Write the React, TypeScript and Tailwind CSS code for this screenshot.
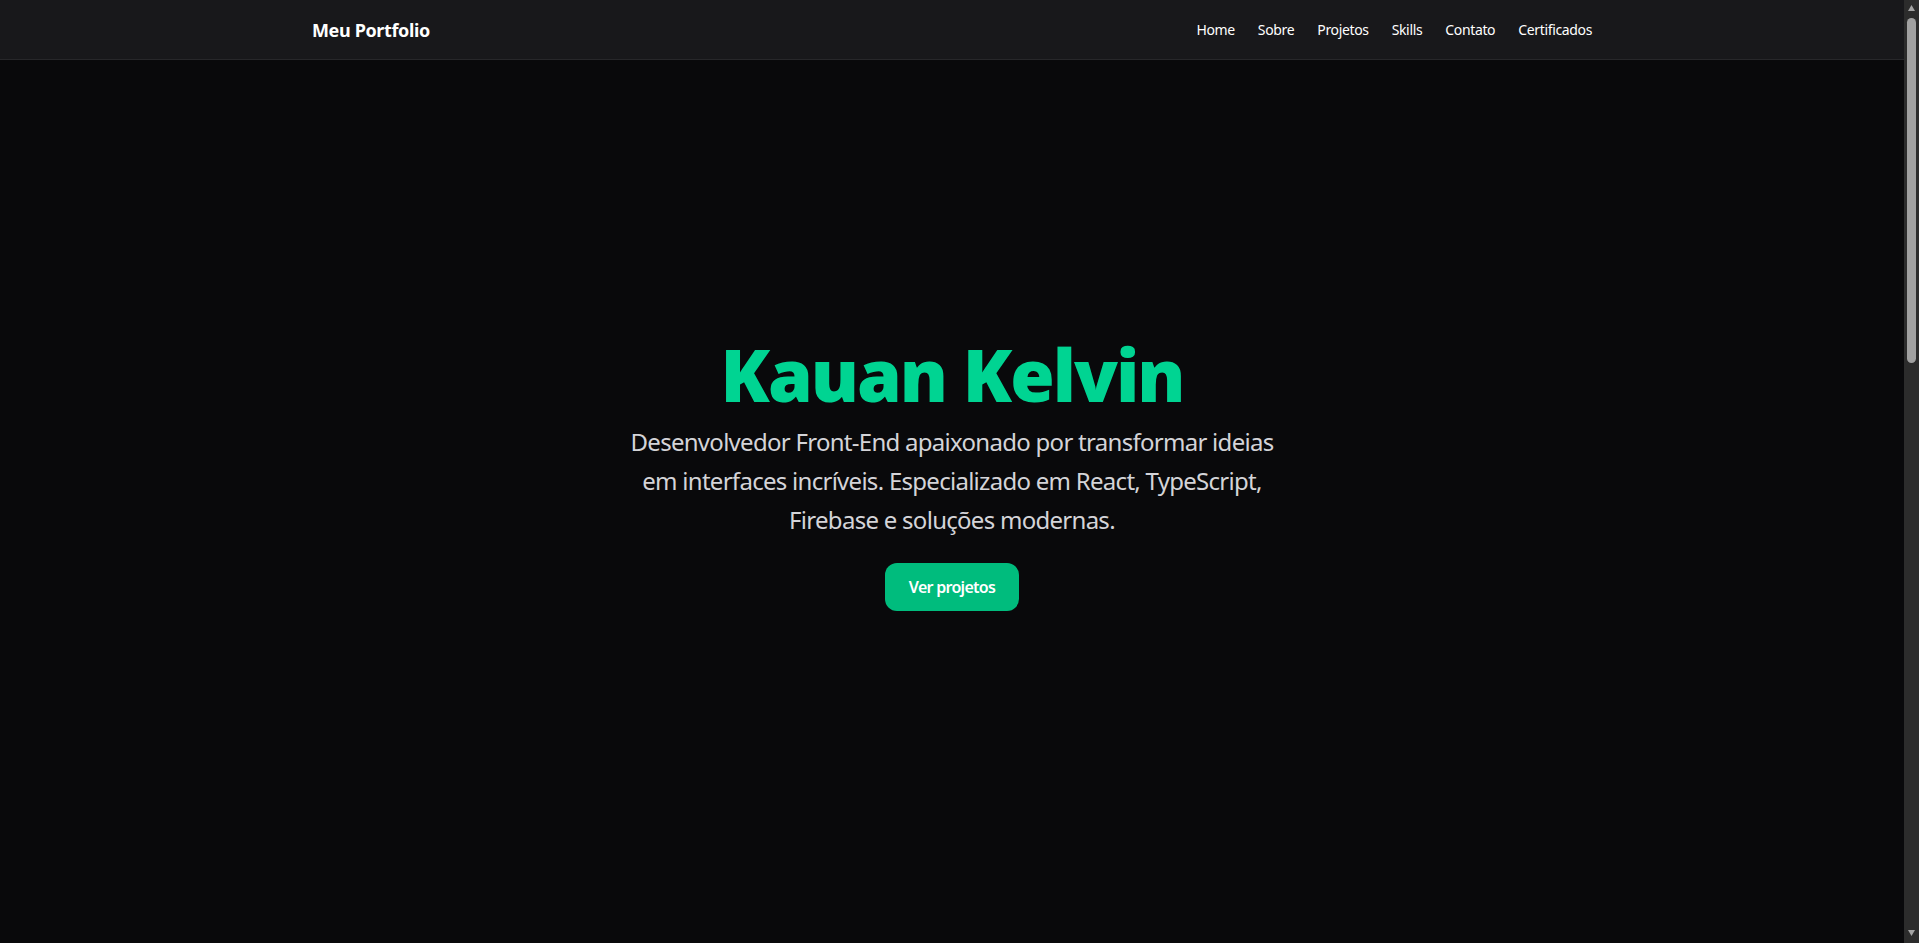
import React from "react";

const font = { fontFamily: '"Noto Sans", "Open Sans", sans-serif' };

const links = ["Home", "Sobre", "Projetos", "Skills", "Contato", "Certificados"];

function Scrollbar() {
  return (
    <div className="w-[15px] h-full bg-[#2c2c2c] flex flex-col items-center shrink-0">
      <svg width="9" height="17" viewBox="0 0 9 17" className="shrink-0">
        <path d="M4.5 5 L8 11 L1 11 Z" fill="#a3a3a3" />
      </svg>
      <div className="w-[9px] h-[345px] mt-[1px] rounded-full bg-[#a1a1a1]" />
      <div className="flex-1" />
      <svg width="9" height="17" viewBox="0 0 9 17" className="shrink-0">
        <path d="M1 4 L8 4 L4.5 10 Z" fill="#a3a3a3" />
      </svg>
    </div>
  );
}

export default function App() {
  return (
    <div className="h-screen flex bg-[#09090b] text-white overflow-hidden" style={font}>
      <div className="flex-1 flex flex-col min-w-0">
        <nav className="h-[60px] shrink-0 bg-[#18181b] border-b border-[#27272a]">
          <div className="max-w-7xl mx-auto h-full flex items-center justify-between">
            <span className="text-lg font-bold text-white tracking-[-0.02em]">Meu Portfolio</span>
            <ul className="flex items-center gap-[23px] text-sm text-white tracking-[-0.025em]">
              {links.map((l) => (
                <li key={l}>
                  <a href={`#${l.toLowerCase()}`}>{l}</a>
                </li>
              ))}
            </ul>
          </div>
        </nav>

        <section id="home" className="flex-1 flex flex-col items-center justify-center text-center px-4 pb-[54px]">
          <h1 className="text-7xl font-black text-[#00d492] leading-none tracking-[-0.028em]">Kauan Kelvin</h1>
          <p className="mt-3 max-w-2xl text-2xl leading-relaxed text-[#d4d4d8] tracking-[-0.03em]">
            Desenvolvedor Front-End apaixonado por transformar ideias em interfaces incríveis. Especializado em React,
            TypeScript, Firebase e soluções modernas.
          </p>
          <a
            href="#projetos"
            className="mt-6 inline-block px-6 py-3 rounded-xl bg-[#00bc7d] text-white font-semibold text-base tracking-[-0.045em]"
          >
            Ver projetos
          </a>
        </section>
      </div>
      <Scrollbar />
    </div>
  );
}
